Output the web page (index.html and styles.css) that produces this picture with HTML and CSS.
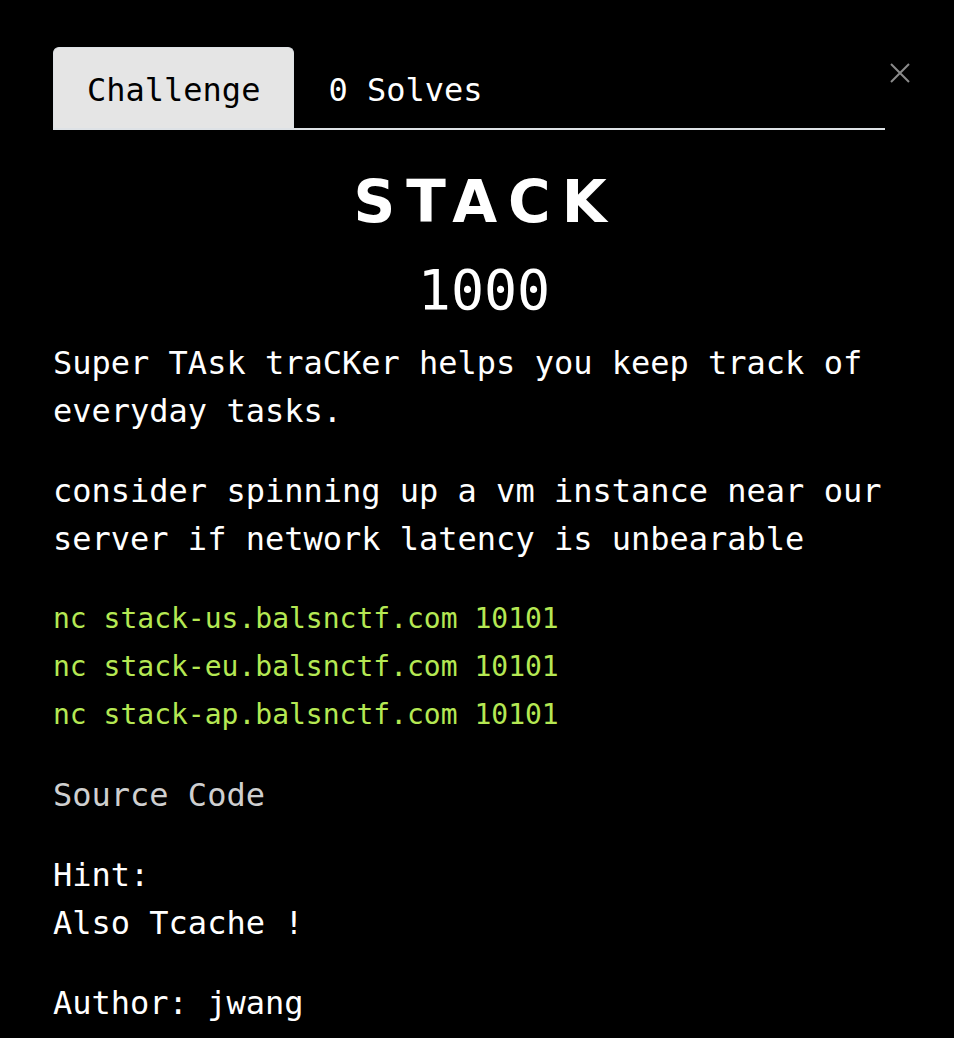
FILE: index.html
```html
<!DOCTYPE html>
<html>
<head>
<meta charset="utf-8">
<link rel="stylesheet" href="styles.css">
</head>
<body>
<div class="modal">
  <button class="close" aria-label="Close">
    <svg width="20" height="20" viewBox="0 0 20 20"><path d="M1 1 L19 19 M19 1 L1 19" stroke="#8a8a8a" stroke-width="2" fill="none"/></svg>
  </button>
  <nav class="tabs">
    <div class="tab active">Challenge</div>
    <div class="tab">0 Solves</div>
  </nav>
  <h2 class="title">STACK</h2>
  <h3 class="value">1000</h3>
  <div class="desc">
    <p>Super TAsk traCKer helps you keep track of everyday tasks.</p>
    <p>consider spinning up a vm instance near our server if network latency is unbearable</p>
    <p class="code">nc stack-us.balsnctf.com 10101<br>nc stack-eu.balsnctf.com 10101<br>nc stack-ap.balsnctf.com 10101</p>
    <p><a class="link" href="#">Source Code</a></p>
    <p>Hint:<br>Also Tcache !</p>
    <p>Author: jwang</p>
  </div>
</div>
</body>
</html>
```

FILE: styles.css
```css
html, body {
  margin: 0;
  padding: 0;
  background: #000;
  color: #fff;
  font-family: "DejaVu Sans Mono", "Liberation Mono", monospace;
}
.modal {
  position: relative;
  width: 862px;
  padding: 47px 39px 0 53px;
}
.close {
  position: absolute;
  top: 63px;
  right: 44px;
  background: none;
  border: 0;
  padding: 0;
  width: 20px;
  height: 20px;
  cursor: pointer;
}
.close svg { display: block; }
.tabs {
  display: flex;
  margin-right: 30px;
  border-bottom: 2px solid #dee2e6;
}
.tab {
  font-size: 32px;
  line-height: 48px;
  padding: 19px 34px 14px 34px;
  color: #fff;
}
.tab.active {
  background: #e5e5e5;
  color: #000;
  border: 1px solid #dee2e6;
  border-bottom: 0;
  border-radius: 6px 6px 0 0;
  padding: 18px 33px 14px 33px;
}
.title {
  margin: 36px 0 0 0;
  text-align: center;
  font-family: "DejaVu Sans", sans-serif;
  font-weight: 700;
  font-size: 58px;
  letter-spacing: 11px;
  line-height: 72px;
  padding-left: 3px;
}
.value {
  margin: 20px 0 0 0;
  text-align: center;
  font-weight: 400;
  font-size: 55px;
  line-height: 64px;
}
.desc {
  margin-top: 17px;
  font-size: 32px;
  line-height: 48px;
}
.desc p {
  margin: 0 0 32px 0;
}
.desc p.code {
  color: #b5e853;
  font-size: 28px;
}
.link {
  color: #cfcfcf;
  text-decoration: none;
}
```
